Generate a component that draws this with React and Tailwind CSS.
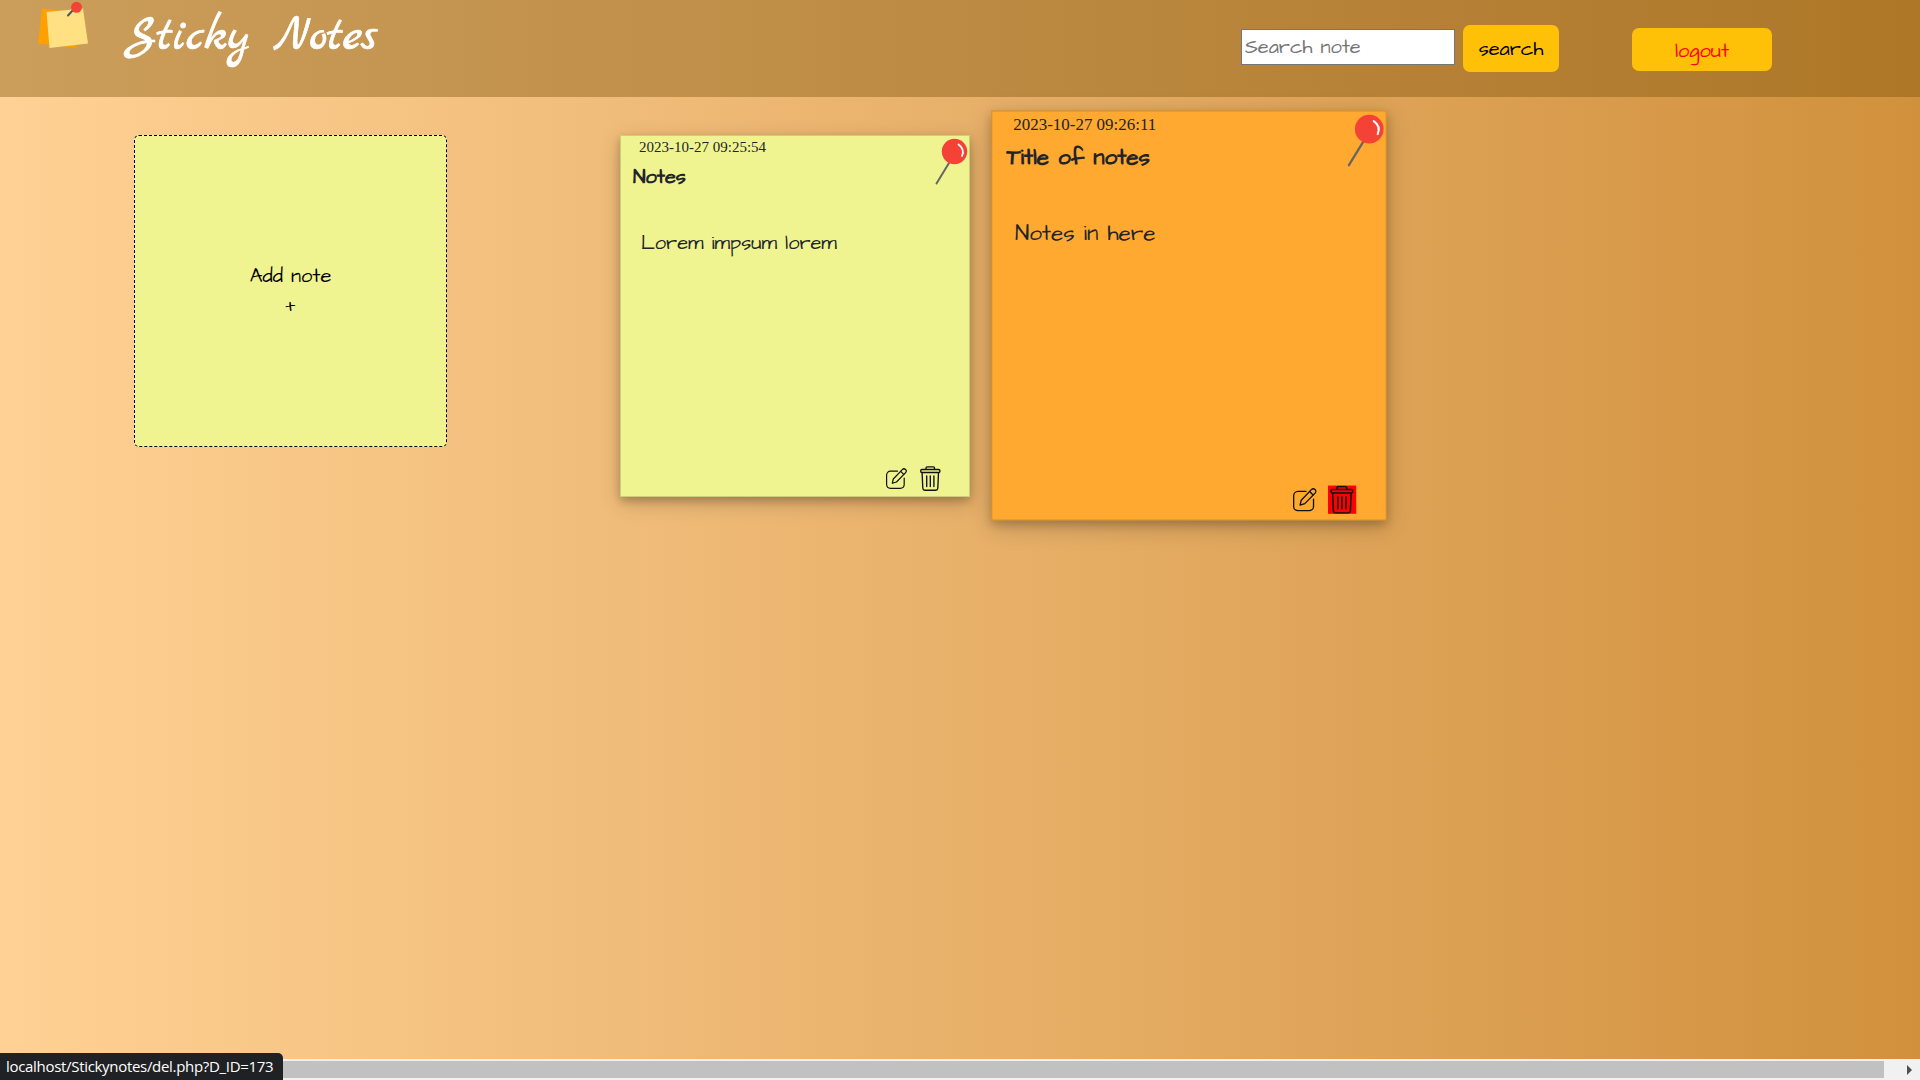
import React from "react";

const hand = "font-['Architects_Daughter','Lato',sans-serif]";

function Logo() {
  return (
    <svg className="block h-[50px] w-[54px]" viewBox="0 0 54 50">
      <path d="M6 8.500L44 13L40 47.800L2 43.500Z" fill="#ffa000" />
      <path d="M10.500 12L47 8.500L52 43.500L13.500 48Z" fill="#ffe082" />
      <path d="M32 15.500L38 9" stroke="#455a64" strokeWidth="2" strokeLinecap="round" />
      <circle cx="40.500" cy="7.300" r="5.500" fill="#f44336" />
    </svg>
  );
}

function Pin() {
  return (
    <svg className="block h-[48px] w-[34px]" viewBox="0 0 34 48">
      <path d="M15 25L2.500 45.500" stroke="#666" strokeWidth="2" strokeLinecap="round" />
      <circle cx="20.500" cy="13.500" r="12.700" fill="#f44336" />
      <path d="M24.500 6.500Q31 11 28 18" stroke="#fff" strokeWidth="1.800" fill="none" strokeLinecap="round" />
    </svg>
  );
}

function EditIcon() {
  return (
    <svg className="block size-[21px]" viewBox="0 0 21 21" fill="none" stroke="currentColor" strokeWidth="1.200" strokeLinejoin="round" strokeLinecap="round">
      <path d="M11.500 3.200H4.500A4 4 0 0 0 .6 7.200V16.500A4 4 0 0 0 4.500 20.300H14.200A4 4 0 0 0 18.200 16.500V10" />
      <path d="M6.300 15.300L7.300 11L16.300 1.600A2.100 2.100 0 0 1 19.600 4.700L10.500 14Z" />
      <path d="M14.700 3.300L17.800 6.400" />
    </svg>
  );
}

function TrashIcon() {
  return (
    <svg className="block size-[25px]" viewBox="0 0 25 25" fill="none" stroke="currentColor" strokeWidth="1.350" strokeLinejoin="round" strokeLinecap="round">
      <path d="M8 3.200V2Q8 .8 9.200 .8H15.300Q16.500 .8 16.500 2V3.200" />
      <rect x="2.700" y="3.500" width="19.200" height="3" rx="1.200" />
      <path d="M4.100 6.800L4.800 22.300Q5 24.200 6.800 24.200H17.800Q19.600 24.200 19.800 22.300L20.500 6.800" />
      <path d="M8.700 9.800V20.600M12.300 9.800V20.600M15.900 9.800V20.600" />
    </svg>
  );
}

function Note({ date, title, body, className, dateClass, titleClass, bodyClass, actionsClass, trashClass }) {
  return (
    <article className={`relative w-[350px] shrink-0 border border-black/15 text-[#212529] shadow-[0_4px_8px_0_rgba(0,0,0,0.2),0_6px_20px_0_rgba(0,0,0,0.19)] ${className}`}>
      <div className="absolute top-[2px] right-[1px]">
        <Pin />
      </div>
      <div className="flex h-full flex-col">
        <time className={`font-['Liberation_Serif',serif] text-[15px] leading-[18px] whitespace-nowrap ${dateClass}`}>{date}</time>
        <h2 className={`text-[20px] leading-[24px] font-bold whitespace-nowrap ${titleClass}`}>{title}</h2>
        <p className={`ml-[20px] text-[20px] leading-[26px] whitespace-nowrap ${bodyClass}`}>{body}</p>
        <div className={`mt-auto mr-[26px] mb-[5px] flex items-center justify-end text-[#111] ${actionsClass}`}>
          <EditIcon />
          <span className={trashClass}>
            <TrashIcon />
          </span>
        </div>
      </div>
    </article>
  );
}

export default function App() {
  return (
    <div className={`flex h-[1080px] w-[1920px] flex-col overflow-hidden bg-linear-to-l from-[#d1913c] to-[#ffd194] ${hand}`}>
      <header className="flex h-[97px] shrink-0 items-start bg-linear-to-l from-[#ae7727] to-[#cb9e5b]">
        <div className="ml-[36px]">
          <Logo />
        </div>
        <h1 className="mt-[7px] ml-[35px] w-[260px] font-['Marck_Script','Dancing_Script',cursive] text-[50px] leading-[60px] font-medium whitespace-nowrap text-white [-webkit-text-stroke:0.7px_white]">Sticky Notes</h1>
        <form className="mt-[25px] ml-[856px] flex items-start">
          <input placeholder="Search note" className="mt-[4px] h-[36px] w-[214px] border border-[#767676] bg-white px-[3px] text-[20px] text-black outline-none placeholder:text-[#757575]" />
          <button type="button" className="ml-[8px] h-[47px] w-[96px] rounded-[7px] bg-[#ffc107] text-[20px] text-black">search</button>
        </form>
        <button type="button" className="mt-[28px] ml-[73px] h-[43px] w-[140px] rounded-[7px] bg-[#ffc107] pt-[2px] text-[20px] text-[#ff0000]">logout</button>
      </header>
      <main className="flex min-h-0 flex-1 items-start pt-[38px]">
        <div className="ml-[134px] flex h-[312px] w-[313px] flex-col items-center justify-center rounded-[5px] border border-dashed border-black bg-[#f0f490] text-[20px] text-black">
          <span className="leading-[30px]">Add note</span>
          <span className="-mt-px mb-px leading-[30px]">+</span>
        </div>
        <div className="ml-[173px] flex gap-[44px]">
          <Note date="2023-10-27 09:25:54" title="Notes" body="Lorem impsum lorem" className="h-[362px] bg-[#f0f490]" dateClass="mt-[2px] ml-[18px]" titleClass="mt-[9px] ml-[12px]" bodyClass="mt-[41px]" actionsClass="gap-[11px]" />
          <Note date="2023-10-27 09:26:11" title="Title of notes" body="Notes in here" className="-mt-px h-[363px] scale-[1.13] bg-[#ffa930]" dateClass="mt-[1.5px] ml-[18.5px]" titleClass="mt-[8px] ml-[12.5px]" bodyClass="mt-[43.5px]" actionsClass="gap-[10.5px]" trashClass="bg-[#ff0000]" />
        </div>
      </main>
      <footer className="flex h-[21px] shrink-0 items-end bg-[#f1f1f1]">
        <div className="z-10 flex h-[27px] w-[283px] shrink-0 items-center rounded-tr-[5px] bg-[#202124] pl-[6px] font-['Open_Sans',sans-serif] text-[15px] tracking-[-0.31px] whitespace-nowrap text-white">localhost/Stickynotes/del.php?D_ID=173</div>
        <div className="mb-[2px] h-[17px] w-[1601px] bg-[#c1c1c1]" />
        <div className="mb-[5px] ml-[23px] border-y-[5px] border-l-[5px] border-y-transparent border-l-[#505050]" />
      </footer>
    </div>
  );
}
